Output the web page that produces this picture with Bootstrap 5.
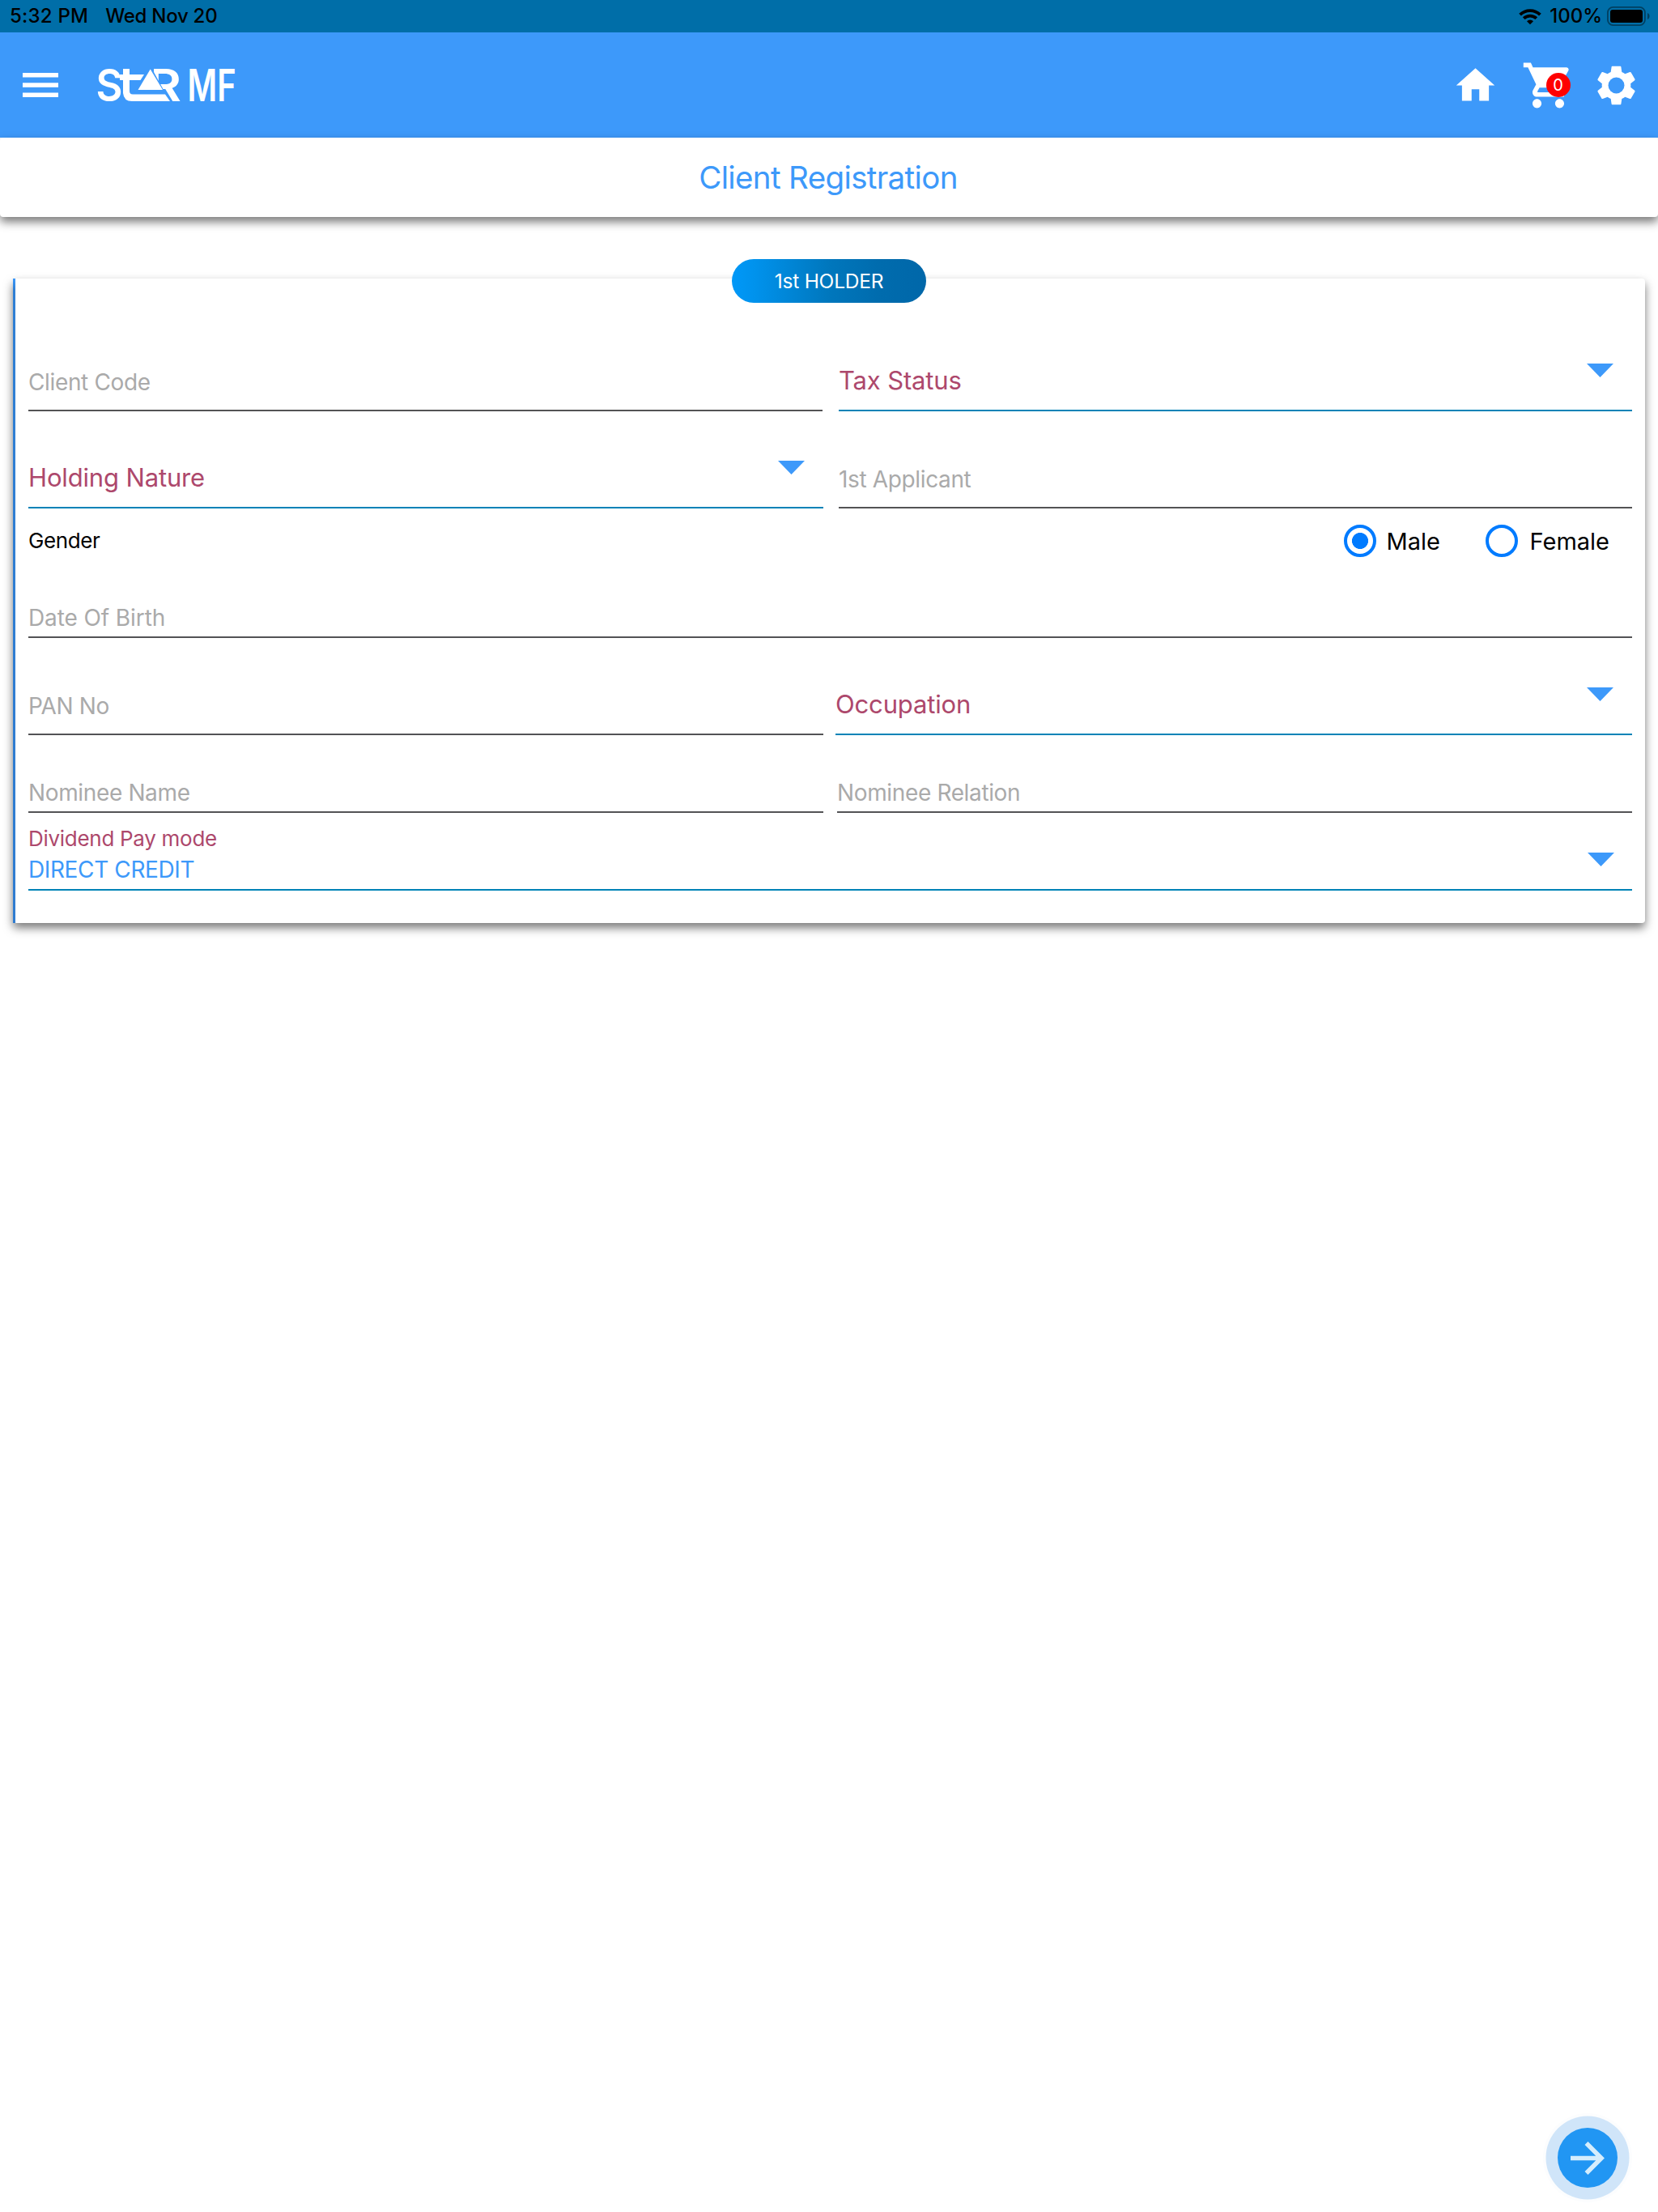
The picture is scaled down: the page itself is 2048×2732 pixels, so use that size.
<!DOCTYPE html>
<html lang="en">
<head>
<meta charset="utf-8">
<meta name="viewport" content="width=device-width, initial-scale=1">
<title>Client Registration</title>
<link href="https://cdn.jsdelivr.net/npm/bootstrap@5.3.0/dist/css/bootstrap.min.css" rel="stylesheet">
<style>
  body { font-family: Inter, "Liberation Sans", sans-serif; color: #000; background: #fff; line-height: 1.21; }
  .status-strip { height: 40px; background: #006ea8; font-size: 24px; font-weight: 500; padding: 0 10px 0 12px; }
  .status-time { letter-spacing: .21px; margin-right: 21px; }
  .status-date { letter-spacing: -.26px; }
  .status-charge { margin: 0 6px 0 10px; }
  .top-nav { height: 130px; background: #3d99fa; padding: 0; }
  .menu-btn { margin-left: 28px; }
  .brand-logo { margin-left: 38px; }
  .brand-logo text { font-family: Inter, sans-serif; fill: #fff; font-size: 55px; font-weight: 600; }
  .nav-actions { padding-right: 23px; }
  .act { width: 57px; height: 57px; }
  .cart-wrap { margin: 0 22px 0 28.5px; height: 67px; width: 67px; }
  .cart-count { left: 30.5px; top: 18.5px; width: 30px; height: 30px; background: #f00; color: #fff; font-size: 20px; line-height: 30px; }
  .raised { background: #fff; box-shadow: 0 6px 12px rgba(0,0,0,.53); }
  .title-card { height: 98px; border-radius: 4px; z-index: 2; font-size: 38.5px; letter-spacing: -.64px; color: #3d99fa; padding: 1px 2px 0 0; }
  .holder-card { margin: 76px 16px 0; border-radius: 4px; padding: 44px 16px 40px 19px; z-index: 1; }
  .holder-card::before { content: ""; position: absolute; left: 0; top: 0; bottom: 0; width: 3px; background: linear-gradient(#3d99fa, #2f7fd4 14px, #2f7cd0); }
  .holder-pill { top: -24px; width: 240px; height: 54px; color: #fff; font-size: 24.5px; letter-spacing: -.22px; padding-top: 1.5px;
    background: linear-gradient(90deg, #0098f8 0%, #0092ec 12%, #0077bd 50%, #006cae 75%, #0067a9 100%); }
  .tall { height: 120px; }
  .nominee { height: 96px; }
  .dob { height: 80px; }
  .gender { height: 80px; }
  .left-col { width: 982px; }
  .row-tax .left-col { width: 981px; }
  .row-tax { gap: 20px; } .row-hold { gap: 19px; } .row-pan { gap: 15px; } .row-nom { gap: 17px; }
  .line-field { border-bottom: 2px solid #535355; }
  .line-select { border-bottom: 2px solid #0083b7; }
  .plain-input { border: 0; border-radius: 0; background: none; outline: 0; width: 100%; height: 34px; line-height: 34px; font-size: 28px; letter-spacing: -.36px; padding: 0; margin: 0 0 17.5px; color: #000; }
  .plain-input::placeholder { color: #aaa; opacity: 1; }
  .dob .plain-input { letter-spacing: -.1px; }
  .dob .plain-input, .nominee .plain-input { margin-bottom: 6px; }
  .select-label { font-size: 31px; line-height: 38px; letter-spacing: -.15px; color: #ad486c; margin: 0 0 17px; }
  .caret-svg { width: 33px; height: 17px; margin: 0 23px 40.5px 0; flex: none; }
  .pay .caret-svg { margin: 0 22px 28.5px 0; }
  .pay-label { font-size: 26px; letter-spacing: -.29px; line-height: 32px; color: #ad486c; }
  .pay-value { font-size: 28px; letter-spacing: -.38px; line-height: 34px; color: #3d99fa; margin: 4.5px 0 7.5px; }
  .gender-label { font-size: 26px; letter-spacing: -.4px; }
  .gender-choice + .gender-choice { margin: 0 28px 0 56px; }
  .radio-dot { appearance: none; width: 40px; height: 40px; border: 4px solid #007bff; margin: 0 13px 0 0; background: #fff; }
  .gender-choice + .gender-choice .radio-dot { margin-right: 14.5px; }
  .radio-dot:checked { background: radial-gradient(circle, #007bff 9.7px, #fff 10.3px); }
  .radio-text { font-size: 29px; line-height: 36px; padding-top: 1px; }
  .next-btn { width: 110px; height: 110px; margin: 0 32px 12px 0; background: #fcfdfe; }
</style>
</head>
<body>
<div class="d-flex flex-column min-vh-100">
  <div class="status-strip d-flex align-items-center">
    <span class="status-time">5:32 PM</span>
    <span class="status-date">Wed Nov 20</span>
    <svg class="ms-auto" width="28" height="21" viewBox="0 0 28 21" fill="none" stroke="#000">
      <path d="M1.6 8.2A17.6 17.6 0 0 1 26.4 8.2" stroke-width="3.8"/>
      <path d="M6.2 12.7A11.2 11.2 0 0 1 21.8 12.7" stroke-width="3.8"/>
      <path d="M14 20.3l-4-4.1a5.6 5.6 0 0 1 8 0z" fill="#000" stroke="none"/>
    </svg>
    <span class="status-charge">100%</span>
    <svg width="53" height="24" viewBox="0 0 53 24">
      <rect x=".9" y=".9" width="46" height="22.2" rx="6.5" fill="none" stroke="#000" stroke-opacity=".42" stroke-width="1.8"/>
      <rect x="4" y="4" width="40" height="16" rx="3" fill="#000"/>
      <path d="M50 8c3.4 1.3 3.4 6.700 0 8z" fill="#000" fill-opacity=".42"/>
    </svg>
  </div>

  <nav class="navbar top-nav d-flex flex-nowrap align-items-center">
    <svg class="menu-btn" width="44" height="30" viewBox="0 0 44 30" fill="#fff">
      <rect width="44" height="5.5"/><rect y="12.3" width="44" height="5.5"/><rect y="24.5" width="44" height="5.5"/>
    </svg>
    <svg class="brand-logo" width="200" height="82" viewBox="-10 -20 200 82">
      <defs><clipPath id="cut"><path d="M70 0H105V42H92L82 27L70 5Z"/></clipPath></defs>
      <text x="-1.5" y="41" textLength="33" lengthAdjust="spacingAndGlyphs">S</text>
      <path d="M32 1h8v7h18l-4.500 7H40v13.500q0 4 4 4h40l6 8.500H43q-10 0-11-10V15h-4V8h4z" fill="#fff"/>
      <path d="M65.700 1.500L81 27H50.500z" fill="#fff"/>
      <g clip-path="url(#cut)"><text x="63" y="41" textLength="41" lengthAdjust="spacingAndGlyphs">R</text></g>
      <text x="111.500" y="41" textLength="60" lengthAdjust="spacingAndGlyphs">MF</text>
    </svg>
    <div class="nav-actions ms-auto d-flex align-items-center">
      <svg class="act" viewBox="0 0 24 24" fill="#fff"><path d="M10 20v-6h4v6h5v-8h3L12 3 2 12h3v8z"/></svg>
      <div class="cart-wrap position-relative">
        <svg class="d-block" width="67" height="67" viewBox="0 0 24 24" fill="#fff"><path d="M7 18c-1.100 0-1.990.9-1.990 2S5.900 22 7 22s2-.9 2-2-.9-2-2-2zM1 2v2h2l3.600 7.590-1.350 2.450c-.16.28-.25.61-.25.96 0 1.100.9 2 2 2h12v-2H7.420c-.14 0-.25-.11-.25-.25l.03-.12.9-1.630h7.450c.75 0 1.410-.41 1.750-1.030l3.580-6.490c.08-.14.12-.31.12-.48 0-.55-.45-1-1-1H5.210l-.94-2H1zm16 16c-1.100 0-1.990.9-1.990 2s.89 2 1.990 2 2-.9 2-2-.9-2-2-2z"/></svg>
        <span class="cart-count position-absolute rounded-circle text-center">0</span>
      </div>
      <svg class="act" viewBox="0 0 24 24"><path fill="#fff" d="M19.430 12.980c.04-.32.07-.64.07-.98s-.03-.66-.07-.98l2.110-1.650c.19-.15.24-.42.12-.64l-2-3.460c-.12-.22-.39-.3-.61-.22l-2.490 1c-.52-.4-1.080-.73-1.690-.98l-.38-2.650C14.460 2.180 14.250 2 14 2h-4c-.25 0-.46.18-.49.42l-.38 2.650c-.61.25-1.170.59-1.690.98l-2.490-1c-.23-.09-.49 0-.61.22l-2 3.460c-.13.22-.07.49.12.64l2.110 1.650c-.04.32-.07.65-.07.98s.03.66.07.98l-2.110 1.650c-.19.15-.24.42-.12.64l2 3.460c.12.22.39.3.61.22l2.490-1c.52.4 1.080.73 1.690.98l.38 2.650c.03.24.24.42.49.42h4c.25 0 .46-.18.49-.42l.38-2.650c.61-.25 1.170-.59 1.690-.98l2.490 1c.23.09.49 0 .61-.22l2-3.460c.12-.22.07-.49-.12-.64l-2.110-1.650z"/><circle cx="12" cy="12" r="4.200" fill="#3d99fa"/></svg>
    </div>
  </nav>

  <div class="title-card raised position-relative d-flex align-items-center justify-content-center">Client Registration</div>

  <form class="holder-card raised position-relative">
    <div class="holder-pill position-absolute start-50 translate-middle-x rounded-pill d-flex align-items-center justify-content-center">1st HOLDER</div>

    <div class="row-tax tall d-flex">
      <div class="left-col line-field d-flex align-items-end"><input class="plain-input" placeholder="Client Code"></div>
      <div class="flex-fill line-select d-flex align-items-end justify-content-between">
        <span class="select-label">Tax Status</span>
        <svg class="caret-svg" viewBox="0 0 33 17"><path d="M0 0h33L16.500 17z" fill="#3d99fa"/></svg>
      </div>
    </div>

    <div class="row-hold tall d-flex">
      <div class="left-col line-select d-flex align-items-end justify-content-between">
        <span class="select-label">Holding Nature</span>
        <svg class="caret-svg" viewBox="0 0 33 17"><path d="M0 0h33L16.500 17z" fill="#3d99fa"/></svg>
      </div>
      <div class="flex-fill line-field d-flex align-items-end"><input class="plain-input" placeholder="1st Applicant"></div>
    </div>

    <div class="gender d-flex align-items-center">
      <span class="gender-label">Gender</span>
      <label class="gender-choice ms-auto d-flex align-items-center"><input type="radio" name="gender" class="radio-dot rounded-circle" checked><span class="radio-text">Male</span></label>
      <label class="gender-choice d-flex align-items-center"><input type="radio" name="gender" class="radio-dot rounded-circle"><span class="radio-text">Female</span></label>
    </div>

    <div class="dob line-field d-flex align-items-end"><input class="plain-input" placeholder="Date Of Birth"></div>

    <div class="row-pan tall d-flex">
      <div class="left-col line-field d-flex align-items-end"><input class="plain-input" placeholder="PAN No"></div>
      <div class="flex-fill line-select d-flex align-items-end justify-content-between">
        <span class="select-label">Occupation</span>
        <svg class="caret-svg" viewBox="0 0 33 17"><path d="M0 0h33L16.500 17z" fill="#3d99fa"/></svg>
      </div>
    </div>

    <div class="row-nom nominee d-flex">
      <div class="left-col line-field d-flex align-items-end"><input class="plain-input" placeholder="Nominee Name"></div>
      <div class="flex-fill line-field d-flex align-items-end"><input class="plain-input" placeholder="Nominee Relation"></div>
    </div>

    <div class="pay nominee line-select d-flex align-items-end justify-content-between">
      <div>
        <div class="pay-label">Dividend Pay mode</div>
        <div class="pay-value">DIRECT CREDIT</div>
      </div>
      <svg class="caret-svg" viewBox="0 0 33 17"><path d="M0 0h33L16.500 17z" fill="#3d99fa"/></svg>
    </div>
  </form>

  <button type="button" class="next-btn btn border-0 p-0 rounded-circle mt-auto align-self-end" aria-label="Next">
    <svg class="d-block" width="110" height="110" viewBox="0 0 110 110">
      <circle cx="55" cy="55" r="51.500" fill="#d0e5f9"/>
      <circle cx="55" cy="55" r="37" fill="#2196f3"/>
      <path d="M34 55.500H72M53.500 37l18.500 18.500L53.500 74" fill="none" stroke="#d5edfd" stroke-width="5.600"/>
    </svg>
  </button>
</div>
<script src="https://cdn.jsdelivr.net/npm/bootstrap@5.3.0/dist/js/bootstrap.bundle.min.js"></script>
</body>
</html>
